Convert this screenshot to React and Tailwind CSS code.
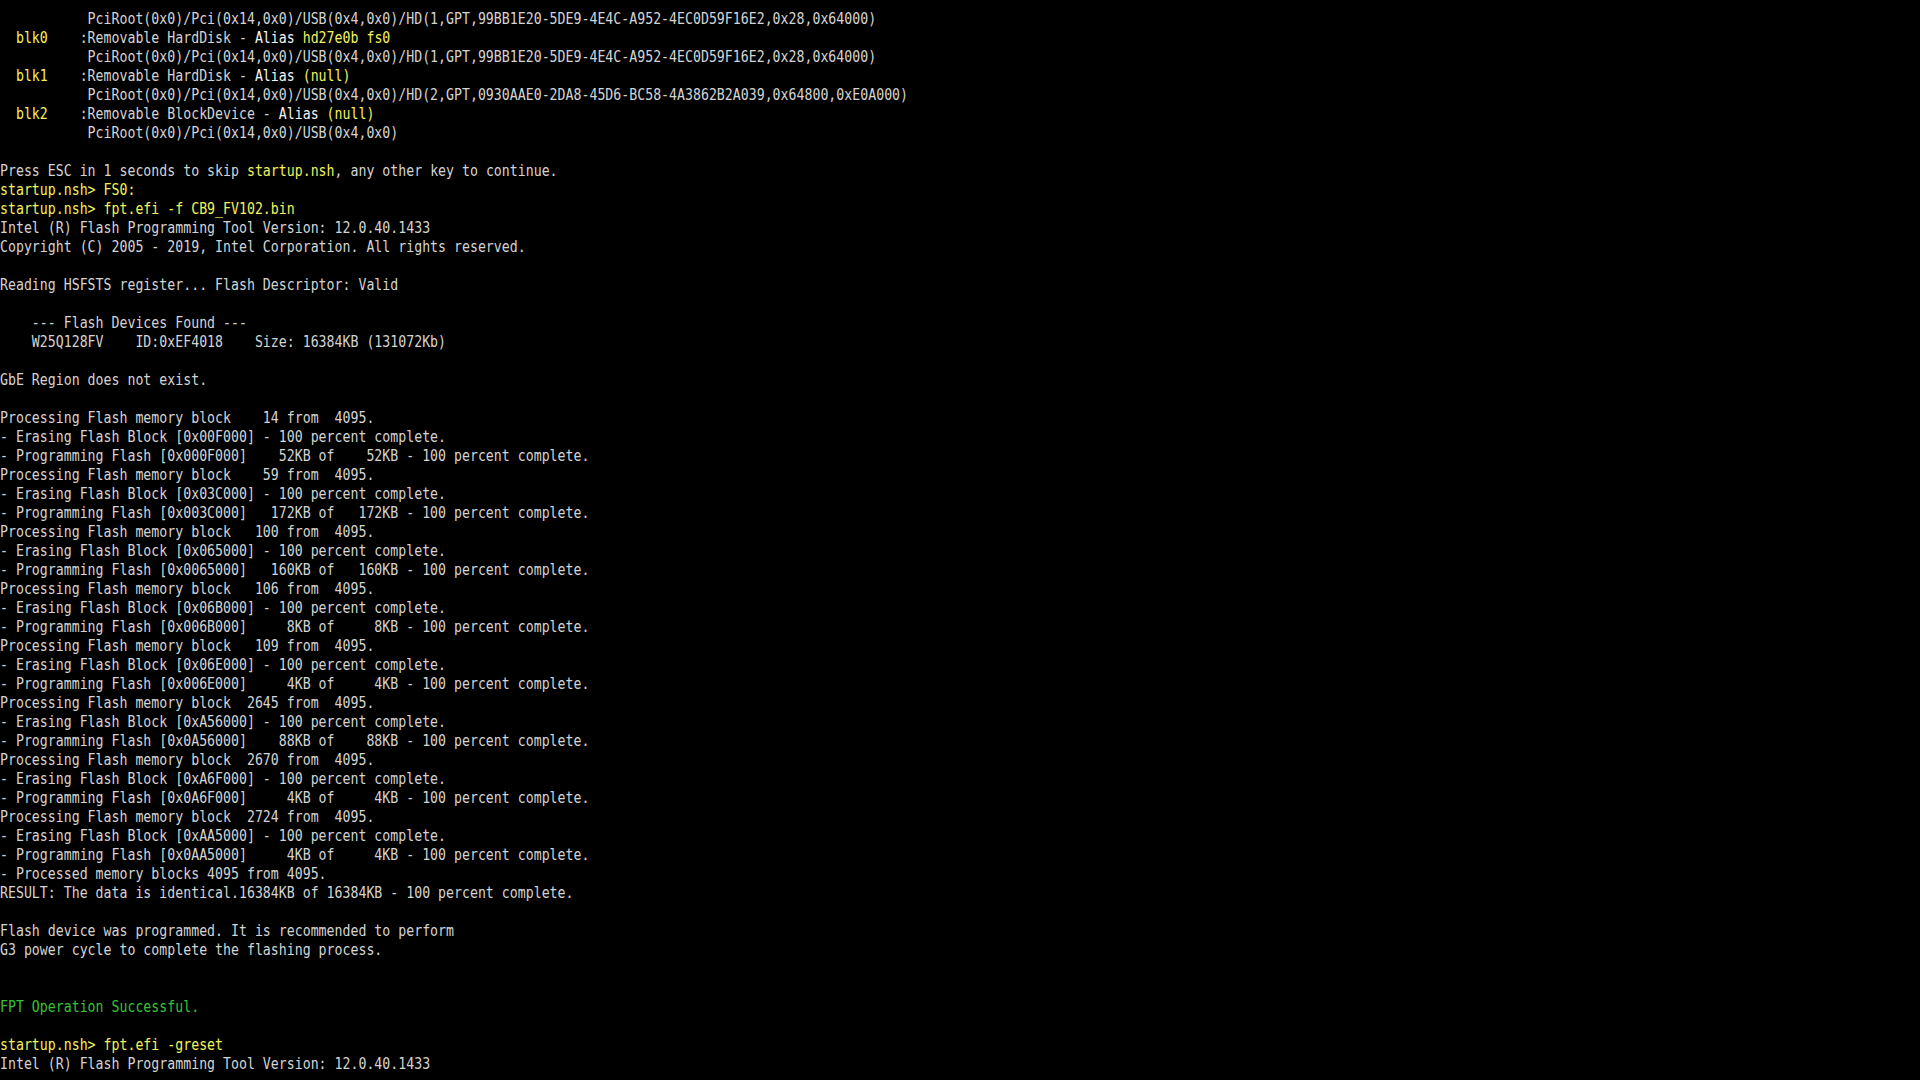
import React from 'react';

const W = 'text-[#d4d4d4]';
const B = 'text-[#f4f4f4]';
const Y = 'text-[#f2f25c]';
const G = 'text-[#36c236]';

const pci = '           PciRoot(0x0)/Pci(0x14,0x0)/USB(0x4,0x0)';

const blocks = [
  [14, '00F000', 52],
  [59, '03C000', 172],
  [100, '065000', 160],
  [106, '06B000', 8],
  [109, '06E000', 4],
  [2645, 'A56000', 88],
  [2670, 'A6F000', 4],
  [2724, 'AA5000', 4],
];

const pad = (n, w) => String(n).padStart(w, ' ');

const lines = [
  [[W, pci + '/HD(1,GPT,99BB1E20-5DE9-4E4C-A952-4EC0D59F16E2,0x28,0x64000)']],
  [[Y, '  blk0'], [W, '    :Removable HardDisk - '], [B, 'Alias '], [Y, 'hd27e0b fs0']],
  [[W, pci + '/HD(1,GPT,99BB1E20-5DE9-4E4C-A952-4EC0D59F16E2,0x28,0x64000)']],
  [[Y, '  blk1'], [W, '    :Removable HardDisk - '], [B, 'Alias '], [Y, '(null)']],
  [[W, pci + '/HD(2,GPT,0930AAE0-2DA8-45D6-BC58-4A3862B2A039,0x64800,0xE0A000)']],
  [[Y, '  blk2'], [W, '    :Removable BlockDevice - '], [B, 'Alias '], [Y, '(null)']],
  [[W, pci]],
  [],
  [[W, 'Press ESC in 1 seconds to skip '], [Y, 'startup.nsh'], [W, ', any other key to continue.']],
  [[Y, 'startup.nsh> FS0:']],
  [[Y, 'startup.nsh> fpt.efi -f CB9_FV102.bin']],
  [[W, 'Intel (R) Flash Programming Tool Version: 12.0.40.1433']],
  [[W, 'Copyright (C) 2005 - 2019, Intel Corporation. All rights reserved.']],
  [],
  [[W, 'Reading HSFSTS register... Flash Descriptor: Valid']],
  [],
  [[W, '    --- Flash Devices Found ---']],
  [[W, '    W25Q128FV    ID:0xEF4018    Size: 16384KB (131072Kb)']],
  [],
  [[W, 'GbE Region does not exist.']],
  [],
  ...blocks.flatMap(([n, addr, kb]) => [
    [[W, `Processing Flash memory block ${pad(n, 5)} from  4095.`]],
    [[W, `- Erasing Flash Block [0x${addr}] - 100 percent complete.`]],
    [[W, `- Programming Flash [0x0${addr}] ${pad(kb, 5)}KB of ${pad(kb, 5)}KB - 100 percent complete.`]],
  ]),
  [[W, '- Processed memory blocks 4095 from 4095.']],
  [[W, 'RESULT: The data is identical.16384KB of 16384KB - 100 percent complete.']],
  [],
  [[W, 'Flash device was programmed. It is recommended to perform']],
  [[W, 'G3 power cycle to complete the flashing process.']],
  [],
  [],
  [[G, 'FPT Operation Successful.']],
  [],
  [[Y, 'startup.nsh> fpt.efi -greset']],
  [[W, 'Intel (R) Flash Programming Tool Version: 12.0.40.1433']],
];

export default function App() {
  return (
    <div className="w-[1920px] h-[1080px] bg-black overflow-hidden">
      <div className="pt-[10px] origin-top-left scale-x-[0.882] font-['DejaVu_Sans_Mono',monospace] text-[15px] leading-[19px] whitespace-pre">
        {lines.map((segs, i) => (
          <div key={i} className="h-[19px]">
            {segs.map(([cls, text], j) => (
              <span key={j} className={cls}>{text}</span>
            ))}
          </div>
        ))}
      </div>
    </div>
  );
}
